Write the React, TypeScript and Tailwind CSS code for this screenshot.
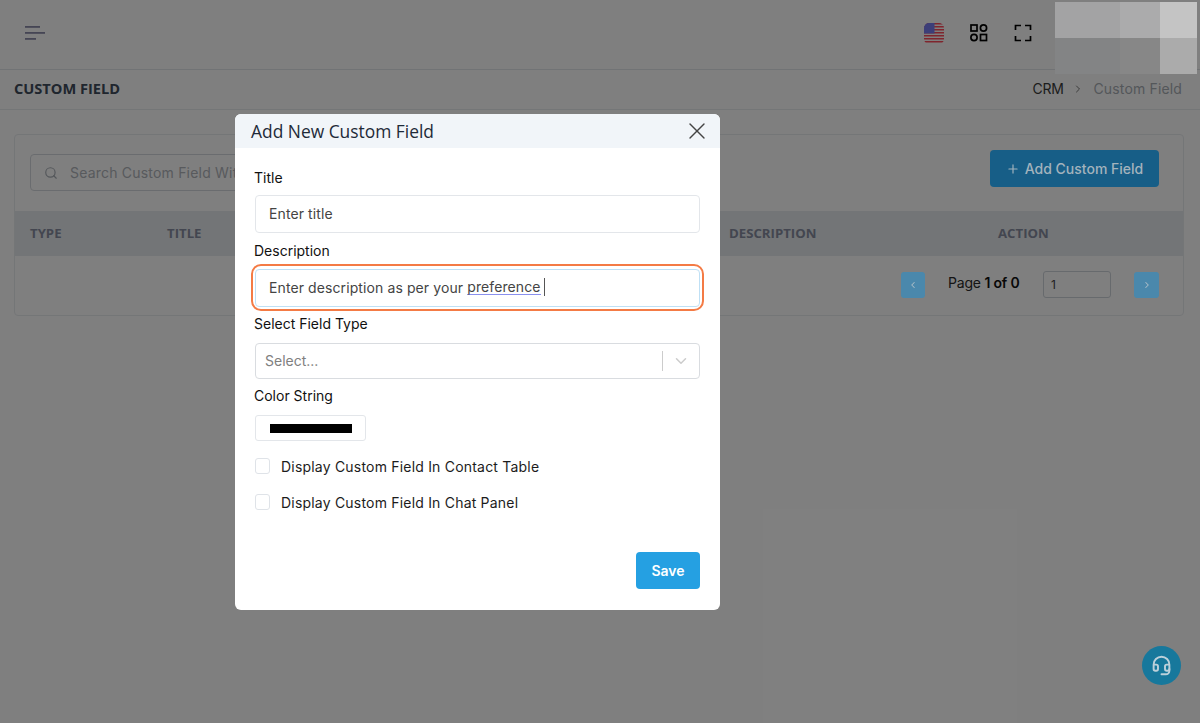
import { ChevronDown, ChevronLeft, ChevronRight, Headset, Plus, Search, X } from "lucide-react";

const body = "font-['Inter','Liberation_Sans',sans-serif]";
const head = "font-['Open_Sans','Liberation_Sans',sans-serif]";

function Flag() {
  return (
    <svg width="20" height="21" viewBox="0 0 20 21">
      <defs>
        <clipPath id="r"><rect width="20" height="21" rx="5" /></clipPath>
      </defs>
      <g clipPath="url(#r)">
        <rect width="20" height="21" fill="#fff" />
        {[0, 3, 6, 9, 12, 15, 18].map((y) => (
          <rect key={y} x="0" y={y} width="20" height="1.5" fill="#ff4a5a" />
        ))}
        <rect width="10.5" height="10.5" fill="#787cf0" />
      </g>
    </svg>
  );
}

function Apps() {
  return (
    <svg width="18" height="18" viewBox="0 0 18 18" fill="none" stroke="#000" strokeWidth="1.7">
      <rect x="1" y="1" width="6" height="6" />
      <circle cx="13.5" cy="4" r="3.1" />
      <circle cx="4" cy="13.5" r="3.1" />
      <rect x="10.5" y="10.5" width="6" height="6" />
    </svg>
  );
}

function Full() {
  return (
    <svg width="18" height="18" viewBox="0 0 18 18" fill="none" stroke="#000" strokeWidth="1.7">
      <path d="M1.5 6V1.5H7M11 1.5h5.5V6M16.5 12v4.5H11M7 16.5H1.5V12" />
    </svg>
  );
}

function Label({ children }: { children: string }) {
  return <div className="-ml-px text-[14px] leading-[18px] text-[#111]">{children}</div>;
}

function Check({ children }: { children: string }) {
  return (
    <div className="flex items-center h-[16px]">
      <span className="w-[15px] h-[16px] rounded-[3px] border border-[#dfe3e8] bg-white" />
      <span className="ml-[11px] text-[14px] text-[#1c1c1c] tracking-[0.2px] whitespace-nowrap">{children}</span>
    </div>
  );
}

export default function App() {
  return (
    <div className={`relative w-[1200px] h-[723px] overflow-hidden bg-white ${body}`}>
      <header className="h-[70px] border-b border-[#e3e6ea] flex items-center pl-[25px] pb-[3px]">
        <svg width="20" height="16" viewBox="0 0 20 16" fill="#8a8aa8">
          <rect x="0" y="1" width="15" height="1.8" />
          <rect x="0" y="7" width="20" height="1.8" />
          <rect x="0" y="13" width="11" height="1.8" />
        </svg>
        <div className="ml-auto flex items-center mr-[168px]">
          <Flag />
          <span className="ml-[26px]"><Apps /></span>
          <span className="ml-[26px]"><Full /></span>
        </div>
      </header>

      <div className="h-[40px] border-b border-[#e9ecef] flex items-center justify-between pl-[14px] pr-[18px] pb-[2px]">
        <h1 className={`${head} text-[14.6px] font-bold text-[#404c5c]`}>CUSTOM FIELD</h1>
        <div className="flex items-center text-[14px]">
          <span className="text-[#3a3a3a] -tracking-[0.3px]">CRM</span>
          <ChevronRight size={12} className="mx-[9px] text-[#777]" />
          <span className="text-[#a8aeb5] tracking-[0.15px]">Custom Field</span>
        </div>
      </div>

      <main className="px-[14px] pt-[24px]">
        <section className="w-[1170px] h-[182px] border border-[#e9ecef] rounded-[4px] bg-white">
          <div className="h-[76px] flex items-start pl-[15px] pr-[24px] pt-[15px]">
            <div className="mt-[4px] w-[420px] h-[37px] border border-[#d5d9de] rounded-[4px] flex items-center pl-[13px]">
              <Search size={14} className="text-[#a8aeb5]" />
              <span className="ml-[12px] text-[14px] text-[#b0b4ba] tracking-[0.2px] whitespace-nowrap">Search Custom Field With Title</span>
            </div>
            <button className="relative z-10 ml-auto w-[169px] h-[37px] rounded-[4px] bg-[#175e87] text-[#a3b3bd] text-[14px] font-medium flex items-center justify-center gap-[5px]">
              <Plus size={14} />
              Add Custom Field
            </button>
          </div>
          <div className={`h-[45px] bg-[#e6eaee] border-y border-[#e6eaee] flex items-center pl-[15px] ${head} text-[13.2px] font-bold text-[#868da0]`}>
            <span className="w-[137px]">TYPE</span>
            <span className="w-[562px]">TITLE</span>
            <span className="w-[269px]">DESCRIPTION</span>
            <span>ACTION</span>
          </div>
          <div className="flex items-center pl-[886px] pt-[15px]">
            <span className="relative z-10 w-[24px] h-[26px] rounded-[3px] bg-[#4a88ac] text-[#a9bbc6] flex items-center justify-center"><ChevronLeft size={10} strokeWidth={2.5} /></span>
            <span className="ml-[23px] w-[72px] text-[14px] text-[#2a2a2a] -tracking-[0.2px] whitespace-nowrap -mt-[5px]">Page <b className="font-semibold text-[#111]">1 of 0</b></span>
            <span className="ml-[23px] w-[68px] h-[27px] rounded-[3px] border border-[#ced4da] text-[12px] text-[#444] flex items-center pl-[7px]">1</span>
            <span className="relative z-10 ml-[23px] w-[25px] h-[26px] rounded-[3px] bg-[#4a88ac] text-[#a9bbc6] flex items-center justify-center"><ChevronRight size={10} strokeWidth={2.5} /></span>
          </div>
        </section>
      </main>

      <div className="absolute z-10 left-[1142px] top-[646px] w-[39px] h-[39px] rounded-full bg-[#17789c] flex items-center justify-center">
        <Headset size={21} strokeWidth={2.2} className="text-[#bcd0da]" />
      </div>

      <div className="absolute inset-0 bg-black/50" />

      <div className="absolute left-[1055px] top-[2px] w-[142px] h-[72px] grid grid-cols-[65px_40px_37px] grid-rows-2">
        <div className="bg-[#a3a3a4]" />
        <div className="bg-[#ababac]" />
        <div className="bg-[#c4c4c4]" />
        <div className="bg-[#838485]" />
        <div className="bg-[#878787]" />
        <div className="bg-[#ababab]" />
      </div>

      <div className="absolute z-20 left-[235px] top-[114px] w-[485px] h-[496px] bg-white rounded-[6px] overflow-hidden flex flex-col">
        <div className={`h-[34px] shrink-0 bg-[#f1f5f9] flex items-center justify-between pl-[16px] pr-[9px] ${head} text-[17.4px] font-medium text-[#1e2a38]`}>
          <span>Add New Custom Field</span>
          <X size={28} strokeWidth={1.15} className="text-[#444]" />
        </div>
        <div className="flex-1 px-[20px] pt-[21px] flex flex-col">
          <Label>Title</Label>
          <div className="mt-[8px] h-[38px] border border-[#e3e6ea] rounded-[4px] flex items-center pl-[13px] pb-[1px] text-[14px] text-[#444] tracking-[0.1px]">Enter title</div>
          <div className="mt-[9px]"><Label>Description</Label></div>
          <div className="relative mt-[9px] h-[38px] border border-[#bfe0f5] rounded-[4px] flex items-center pl-[13px] pb-[2px] text-[14px] text-[#444] tracking-[0.1px]">
            <span className="absolute -left-[5px] -right-[5px] -top-[6px] -bottom-[5px] rounded-[10px] border-[2.5px] border-[#f47b45]" />
            Enter description as per your&nbsp;<span className="leading-[15px] border-b border-[#8a90ee]">preference</span>
            <span className="ml-[3px] w-px h-[18px] bg-[#555]" />
          </div>
          <div className="mt-[8px]"><Label>Select Field Type</Label></div>
          <div className="mt-[10px] h-[36px] border border-[#d9dce0] rounded-[4px] flex items-center pl-[9px] pb-[1px] text-[14px] text-[#808080]">
            <span>Select...</span>
            <span className="ml-auto w-px h-[20px] bg-[#ccc]" />
            <ChevronDown size={18} className="mx-[9px] text-[#ccc]" />
          </div>
          <div className="mt-[8px]"><Label>Color String</Label></div>
          <div className="mt-[10px] w-[111px] h-[26px] border border-[#e3e6ea] rounded-[3px] flex items-center justify-center">
            <span className="w-[82px] h-[9px] bg-black" />
          </div>
          <div className="mt-[17px]"><Check>Display Custom Field In Contact Table</Check></div>
          <div className="mt-[20px]"><Check>Display Custom Field In Chat Panel</Check></div>
          <button className="mt-[42px] ml-auto w-[64px] h-[37px] rounded-[4px] bg-[#25a0e2] text-white text-[14px] font-semibold">Save</button>
        </div>
      </div>
    </div>
  );
}
